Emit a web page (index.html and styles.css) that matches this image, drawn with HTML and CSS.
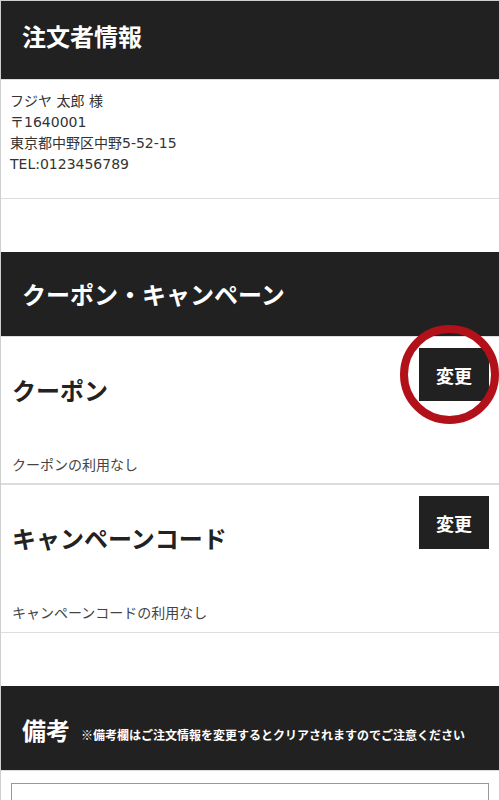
FILE: index.html
```html
<!DOCTYPE html>
<html lang="ja">
<head>
<meta charset="utf-8">
<title>注文者情報</title>
<link rel="stylesheet" href="styles.css">
</head>
<body>
<div class="page">
  <section class="block">
    <h2 class="sec-head sec-head--first">注文者情報</h2>
    <div class="order-body">
      <p>フジヤ 太郎 様</p>
      <p>〒1640001</p>
      <p>東京都中野区中野5-52-15</p>
      <p>TEL:0123456789</p>
    </div>
  </section>

  <section class="block">
    <h2 class="sec-head">クーポン・キャンペーン</h2>
    <div class="item item--first">
      <div class="item-row">
        <h3 class="item-title">クーポン</h3>
        <div class="btn-wrap">
          <button class="btn">変更</button>
          <span class="mark"></span>
        </div>
      </div>
      <p class="item-desc">クーポンの利用なし</p>
    </div>
    <div class="item">
      <div class="item-row">
        <h3 class="item-title">キャンペーンコード</h3>
        <div class="btn-wrap">
          <button class="btn">変更</button>
        </div>
      </div>
      <p class="item-desc">キャンペーンコードの利用なし</p>
    </div>
  </section>

  <section class="block block--last">
    <h2 class="sec-head sec-head--note">備考<span class="note">※備考欄はご注文情報を変更するとクリアされますのでご注意ください</span></h2>
    <div class="remarks">
      <textarea class="remarks-input"></textarea>
    </div>
  </section>
</div>
</body>
</html>
```

FILE: styles.css
```css
html {
  overflow: hidden;
}

body {
  margin: 0;
  background: #fff;
  font-family: "Noto Sans CJK JP", "Noto Sans", sans-serif;
  color: #333;
}

.page {
  width: 500px;
  box-sizing: border-box;
  border: 1px solid #cfcfcf;
  border-bottom: none;
  min-height: 800px;
}

.block {
  margin-bottom: 53px;
}

.block--last {
  margin-bottom: 0;
}

.sec-head {
  margin: 0;
  box-sizing: border-box;
  display: flex;
  align-items: center;
  padding: 0 0 0 21px;
  background: #212121;
  color: #fff;
  font-size: 24px;
  font-weight: 700;
  line-height: 1;
  border-bottom: 1px solid #ddd;
  height: 85px;
}

.sec-head--first {
  height: 79px;
  padding-bottom: 8px;
}

.sec-head--note {
  align-items: baseline;
  padding-top: 32px;
}

.note {
  font-size: 12px;
  margin-left: 11px;
}

.order-body {
  padding: 11px 9px 23px;
  border-bottom: 1px solid #ddd;
  font-family: "DejaVu Sans", "Noto Sans CJK JP", sans-serif;
  font-size: 14px;
  line-height: 21px;
  color: #333;
}

.order-body p {
  margin: 0;
}

.item {
  height: 148px;
  box-sizing: border-box;
  padding: 11px 10px 0 11px;
  border-bottom: 1px solid #ddd;
}

.item--first {
  border-bottom: 2px solid #ddd;
}

.item-row {
  display: flex;
  justify-content: space-between;
  align-items: flex-start;
}

.item-title {
  margin: 24px 0 0;
  font-size: 24px;
  line-height: 36px;
  font-weight: 700;
  color: #222;
}

.btn-wrap {
  position: relative;
}

.btn {
  display: block;
  width: 70px;
  height: 53px;
  border: none;
  padding: 0;
  background: #212121;
  color: #fff;
  font-family: "Noto Sans CJK JP", "Noto Sans", sans-serif;
  font-size: 18px;
  font-weight: 700;
}

.mark {
  position: absolute;
  left: -19px;
  top: -23px;
  width: 99px;
  height: 99px;
  box-sizing: border-box;
  border: 8px solid #b3111a;
  border-radius: 50%;
}

.item-desc {
  margin: 46px 0 0;
  font-size: 14px;
  line-height: 20px;
  color: #444;
}

.remarks {
  padding: 12px 10px 0 10px;
}

.remarks-input {
  display: block;
  width: 100%;
  box-sizing: border-box;
  height: 80px;
  border: 1px solid #999;
  resize: none;
  margin: 0;
}
```
